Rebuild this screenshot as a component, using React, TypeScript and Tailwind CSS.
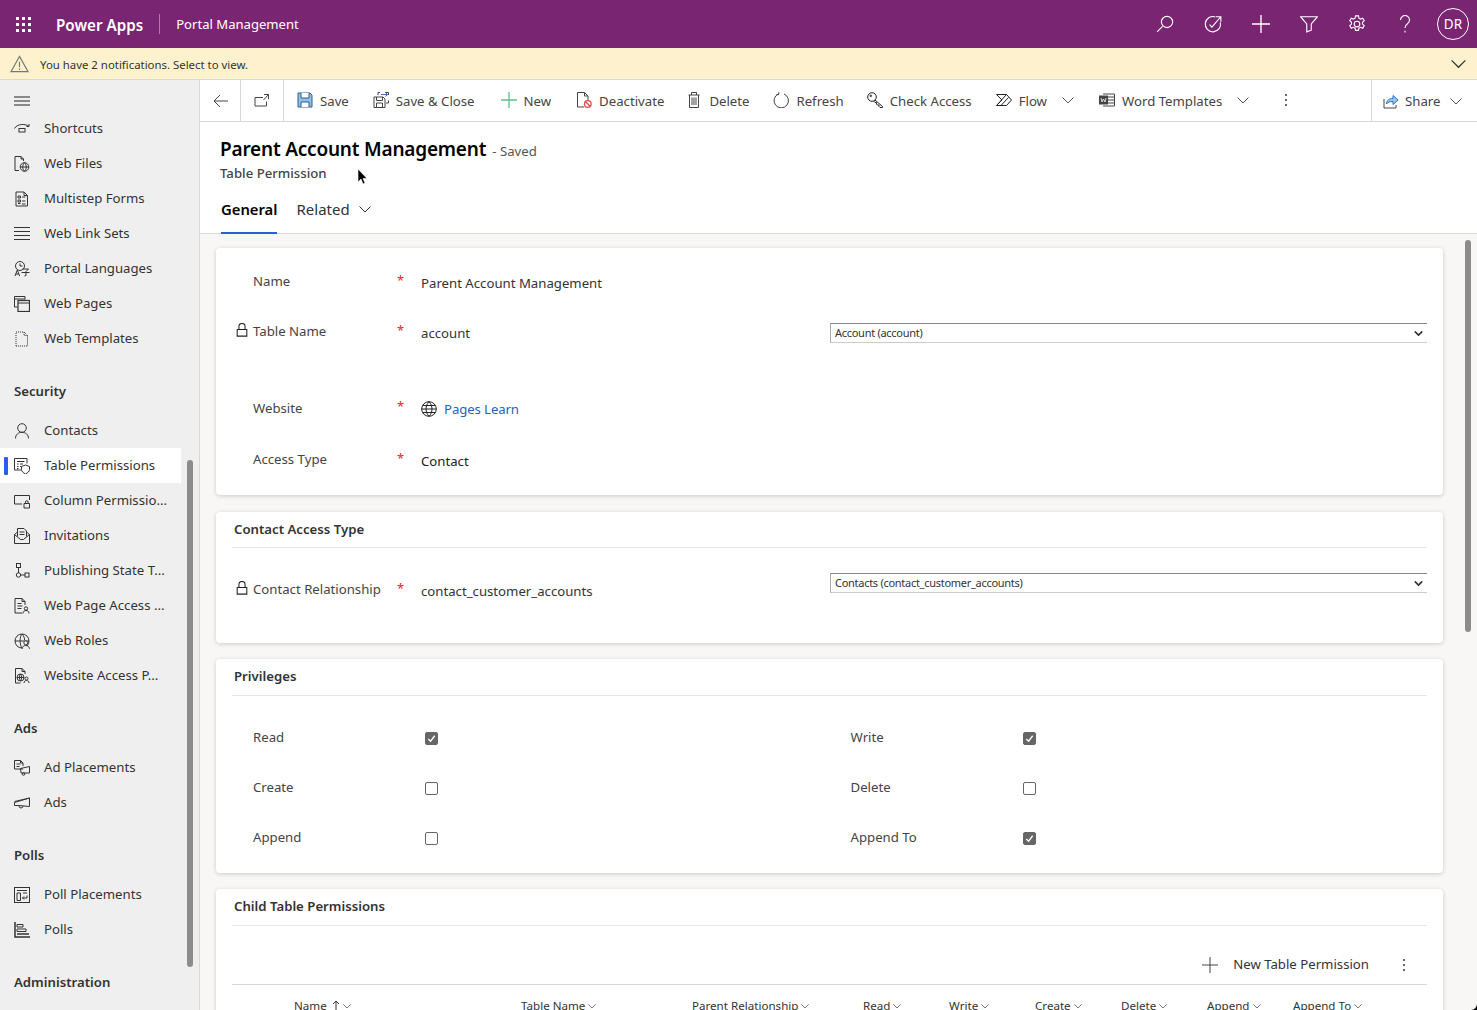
import type { ReactNode } from 'react'
import { ChevronDown } from 'lucide-react'

const Ico = ({ children, size = 16, className = '' }: { children: ReactNode; size?: number; className?: string }) => (
  <svg viewBox="0 0 16 16" width={size} height={size} fill="none" stroke="currentColor" strokeWidth="1" className={`shrink-0 ${className}`}>
    {children}
  </svg>
)

const Chev = ({ className = '' }: { className?: string }) => (
  <svg viewBox="0 0 12 12" width="12" height="12" fill="none" stroke="currentColor" strokeWidth="1" className={`shrink-0 ${className}`}>
    <path d="M.5 3.5 6 9l5.5-5.5" />
  </svg>
)

// sidebar glyphs
const navIcons: Record<string, ReactNode> = {
  shortcuts: <><path d="M.5 7.5C3 2.5 12 2.5 15 5.5" /><path d="M15 3v2.5h-2.5" /><rect x="5" y="7.5" width="6" height="3.5" /></>,
  webFiles: <><path d="M9.5 5V3L7 .5H1v14h4M7 .5V3h2.5" /><circle cx="10.5" cy="11" r="4.3" /><path d="M6.2 11h8.6M10.5 6.7c-2.4 2.500-2.400 6.100 0 8.600M10.500 6.700c2.400 2.500 2.400 6.100 0 8.600" /></>,
  forms: <><path d="M13.500 15H2V1h8l3.500 3.500zM10 1v3.500h3.500" /><path d="M4 5h2.500v2H4zM4 9h2.500v2H4zM4 12.500h2.500M8 6h3.500M8 10h3.500M8 13h3.500" /></>,
  linkSets: <path d="M0 1.500h16M0 5.500h16M0 9.500h16M0 13.500h16" />,
  languages: <><circle cx="6" cy="5" r="4.500" /><path d="M6 2.500V5h2.500" /><path d="M1 15l2.300-6 2.300 6M1.800 13h3M8.500 8h6l-2.500 2.500v4l-1.500.5M7.500 11.500h8" /></>,
  pages: <><path d="M11 3.500V.5H.5v10.500h3" /><path d="M.5 3h10.500" /><rect x="4" y="4.500" width="11.500" height="11" strokeWidth="1.200" /><path d="M4 7h11.500" /></>,
  templates: <path d="M2 15V1h8l3.500 3.500V15zM10 1v3.500h3.500" strokeDasharray="1 1" />,
  contacts: <><circle cx="8" cy="5" r="4.300" /><path d="M1.500 15.500c0-4 3-6.200 6.500-6.200s6.500 2.200 6.500 6.200" /></>,
  tablePerm: <><path d="M7 12H.5V.5H13v5" /><path d="M3 3.500h7.500M3 6h1.500M6 6h3M3 8.500h1.500M3 10.500h1.500M6 8.500h1" /><path d="M11.500 7l4 1.500v3c0 2-2 3.500-4 4.500-2-1-4-2.500-4-4.500v-3z" /></>,
  colPerm: <><path d="M8 11H.5V2.500h15V7" /><path d="M10 10.500h5.500V15H10zM11.500 10.500V9a1.300 1.300 0 0 1 2.600 0v1.500" /></>,
  invitations: <><path d="M.5 6.500v9h15v-9L13 4.500M3 4.500.5 6.500l6 5h3l6-5" /><path d="M3.500 8.500V.5H10l2.500 2.500v5.500M5.500 4h5M5.500 6.500h5" /></>,
  publishing: <><rect x="2.500" y=".5" width="4" height="4" /><path d="M4.500 4.500V10" /><circle cx="4.500" cy="12" r="2.200" /><path d="M6.700 12H11" /><rect x="11" y="10" width="4" height="4" /></>,
  pageAccess: <><path d="M11 7V3.500L8 .5H1v14.500h7M8 .5v3h3" /><path d="M3.500 5.500h4M3.500 8h5M3.500 10.500h4" /><circle cx="12" cy="10.500" r="1.700" /><path d="M9 15.500c0-2 1.300-3 3-3s3 1 3 3" /></>,
  roles: <><circle cx="8" cy="8" r="7" /><path d="M1 8h14M8 1C5.500 3.500 5.500 12 8 15M8 1c2.500 2.500 2.500 5 2.500 6" /><circle cx="11.800" cy="9.800" r="2" fill="#efefef" /><path d="M8.200 15.800c0-2 1.600-3.300 3.600-3.300s3.600 1.300 3.600 3.300" fill="#efefef" /></>,
  siteAccess: <><path d="M11 6V3.500L8 .5H1.500v14.500h5M8 .5v3h3" /><circle cx="6.500" cy="9.500" r="3.500" /><path d="M3 9.500h7M6.500 6c-1.500 2-1.500 5 0 7M6.500 6c1.500 2 1.500 5 0 7" /><circle cx="12.500" cy="10.500" r="1.500" /><path d="M10 15c0-1.500 1-2.500 2.500-2.500S15 13.500 15 15" /></>,
  adPlace: <><path d="M9 9H.5V.5h6L9 3v3M6.500.5V3H9" /><path d="M2.500 4h4M2.500 6.500h3" /><path d="M6.500 8.500l9-2v6.500H7z" /><circle cx="9.500" cy="14" r="1.300" /></>,
  ads: <><path d="M15.500 3v8.500L5 10.500H.5V7.500z" /><path d="M5 11a2 2 0 0 0 4 0" /><path d="M.5 6.500 15.500 3" /></>,
  pollPlace: <><rect x=".5" y=".5" width="15" height="15" /><path d="M3 3.500h10M3 6h3.500v7.500H3zM9 6h4M13 8.500V11H8.500M10 9.500 8.500 11l1.500 1.500" /></>,
  polls: <><path d="M1 0v15h15" strokeWidth="1.500" /><path d="M3 2.500h6v2.500H3zM3 7h9v2.500H3z" /><path d="M3 12h12" strokeWidth="1.500" /></>,
}

type NavRow = { type: 'item'; label: string; icon: string; active?: boolean } | { type: 'head'; label: string }

const nav: NavRow[] = [
  { type: 'item', label: 'Shortcuts', icon: 'shortcuts' },
  { type: 'item', label: 'Web Files', icon: 'webFiles' },
  { type: 'item', label: 'Multistep Forms', icon: 'forms' },
  { type: 'item', label: 'Web Link Sets', icon: 'linkSets' },
  { type: 'item', label: 'Portal Languages', icon: 'languages' },
  { type: 'item', label: 'Web Pages', icon: 'pages' },
  { type: 'item', label: 'Web Templates', icon: 'templates' },
  { type: 'head', label: 'Security' },
  { type: 'item', label: 'Contacts', icon: 'contacts' },
  { type: 'item', label: 'Table Permissions', icon: 'tablePerm', active: true },
  { type: 'item', label: 'Column Permissio...', icon: 'colPerm' },
  { type: 'item', label: 'Invitations', icon: 'invitations' },
  { type: 'item', label: 'Publishing State T...', icon: 'publishing' },
  { type: 'item', label: 'Web Page Access ...', icon: 'pageAccess' },
  { type: 'item', label: 'Web Roles', icon: 'roles' },
  { type: 'item', label: 'Website Access P...', icon: 'siteAccess' },
  { type: 'head', label: 'Ads' },
  { type: 'item', label: 'Ad Placements', icon: 'adPlace' },
  { type: 'item', label: 'Ads', icon: 'ads' },
  { type: 'head', label: 'Polls' },
  { type: 'item', label: 'Poll Placements', icon: 'pollPlace' },
  { type: 'item', label: 'Polls', icon: 'polls' },
  { type: 'head', label: 'Administration' },
]

function TopBar() {
  return (
    <header className="flex h-12 shrink-0 items-center bg-[#7a2571] text-white">
      <div className="ml-4 grid w-[15px] grid-cols-3 gap-[3px]">
        {Array.from({ length: 9 }).map((_, i) => (
          <span key={i} className="size-[3px] bg-white" />
        ))}
      </div>
      <span className="ml-[25px] translate-y-px text-[15.2px] font-semibold">Power Apps</span>
      <span className="ml-4 h-5 w-px bg-white/40" />
      <span className="ml-4 translate-y-px text-[13.1px]">Portal Management</span>
      <div className="ml-auto flex items-center">
        <span className="flex w-12 justify-center">
          <Ico size={18}><path d="M1 15l4.800-4.800" /><circle cx="9.800" cy="6.200" r="5" /></Ico>
        </span>
        <span className="flex w-12 justify-center">
          <Ico size={18}><path d="M14.500 6.500A6.800 6.800 0 1 1 10 1.700" /><path d="M5 8.500l2 2.200L14.500 2M10.500 1.500h4.500V6" /></Ico>
        </span>
        <span className="flex w-12 justify-center">
          <Ico size={18}><path d="M8 0v16M0 8h16" strokeWidth="1.200" /></Ico>
        </span>
        <span className="flex w-12 justify-center">
          <Ico size={18}><path d="M.5 1.500h15L10 8v5.500L6 15V8z" /></Ico>
        </span>
        <span className="flex w-12 justify-center">
          <Ico size={18}>
            <circle cx="8" cy="8" r="2.500" />
            <path d="M6.700.8h2.600l.4 2 1.500.8 1.900-.8 1.300 2.300-1.500 1.300v1.700l1.500 1.300-1.300 2.300-1.900-.8-1.500.8-.4 2H6.700l-.4-2-1.500-.8-1.900.8-1.300-2.300 1.500-1.300V6.400L1.600 5.100l1.300-2.300 1.900.8 1.500-.8z" />
          </Ico>
        </span>
        <span className="flex w-12 justify-center">
          <Ico size={18}><path d="M4 4.500a4 4 0 1 1 6.200 3.300C8.800 8.800 8 9.500 8 11.500M8 14v1.500" /></Ico>
        </span>
        <span className="flex w-12 justify-center">
          <span className="flex size-8 items-center justify-center rounded-full border border-white text-[13.5px]">DR</span>
        </span>
      </div>
    </header>
  )
}

function Notice() {
  return (
    <div className="flex h-8 shrink-0 items-center border-b border-[#d8d8d8] bg-[#fdf2cd] pl-[10px] pr-[11px] text-[#333]">
      <svg viewBox="0 0 20 18" width="19" height="18" fill="none" stroke="#777" strokeWidth="1.200" className="shrink-0">
        <path d="M10 1 19 17H1z" />
        <path d="M10 6.500v6M10 13.800v1.400" />
      </svg>
      <span className="ml-[11px] translate-y-px text-[11.4px]">You have 2 notifications. Select to view.</span>
      <Chev className="ml-auto size-[15px]" />
    </div>
  )
}

function Cmd({ icon, label, chevron, className = '' }: { icon: ReactNode; label: string; chevron?: boolean; className?: string }) {
  return (
    <div className={`flex items-center ${className}`}>
      {icon}
      <span className="ml-[7px] translate-y-px whitespace-nowrap">{label}</span>
      {chevron && <Chev className="ml-[15px] mr-[-2px] text-[#555]" />}
    </div>
  )
}

const Dots = ({ className = '' }: { className?: string }) => (
  <div className={`flex flex-col gap-[3px] ${className}`}>
    <span className="size-[2px] rounded-full bg-[#333]" />
    <span className="size-[2px] rounded-full bg-[#333]" />
    <span className="size-[2px] rounded-full bg-[#333]" />
  </div>
)

function CommandBar() {
  return (
    <div className="flex h-[42px] shrink-0 items-center border-b border-[#d8d8d8] bg-white text-[13.2px] text-[#444]">
      <div className="flex h-full w-[41px] shrink-0 items-center justify-center border-r border-[#d8d8d8] pl-px">
        <Ico><path d="M15 8H1M7 2 1 8l6 6" /></Ico>
      </div>
      <div className="flex h-full w-[43px] shrink-0 items-center justify-center border-r border-[#d8d8d8]">
        <Ico><path d="M9 4.500H1v8.500h11.500V8.500M10 1.500h4.500V6M14.500 1.500 9.500 7" /></Ico>
      </div>
      <div className="flex flex-1 items-center gap-[24px] pl-[13px]">
        <Cmd label="Save" icon={<Ico className="text-[#2f5f8a]"><path d="M1 1h12l2 2v12H1z" fill="#8fc1ea" /><path d="M4 1v5h8V1M4 15v-5h8v5" fill="#fff" /></Ico>} />
        <Cmd label="Save & Close" icon={<Ico><path d="M1 5h9l2 2v8.500H1z" /><path d="M3.500 5v3.500h6V5M3.500 15.500V11h6v4.500" /><path d="M5 3V.5h2M12 .5h3.500V3M15.500 8.500V11H13" /><path d="M8 2.500h6.500M12.500.5l2 2-2 2" stroke="#2a6fc4" /></Ico>} />
        <Cmd label="New" className="ml-[2px]" icon={<Ico className="text-[#5cc18f]"><path d="M8 0v16M0 8h16" strokeWidth="1.300" /></Ico>} />
        <Cmd label="Deactivate" className="ml-px" icon={<Ico><path d="M8 15H1.500V.5h7l3.500 3.500V8M8.500.5V4H12" /><circle cx="11.800" cy="12" r="3.300" stroke="#e5484d" strokeWidth="1.300" /><path d="m9.500 9.700 4.600 4.600" stroke="#e5484d" strokeWidth="1.300" /></Ico>} />
        <Cmd label="Delete" className="ml-[-2px]" icon={<Ico><path d="M2.500 3h11M3.500 3v12.500h9V3M5.500 3V.5h5V3M6 5.500v7.500M8 5.500v7.500M10 5.500v7.500" /></Ico>} />
        <Cmd label="Refresh" icon={<Ico><path d="M5.500 2A7.200 7.200 0 1 0 11 2" /><path d="M5.800 .2V2.500H3.500" /></Ico>} />
        <Cmd label="Check Access" className="ml-[-1px]" icon={<Ico className="text-[#222]"><circle cx="5" cy="5" r="4.300" /><path d="M8 8 15.500 14.500v1H13l-1-1V13h-1.500l-1-1v-1.500H8L6.500 9" /><circle cx="3.800" cy="3.800" r=".8" /></Ico>} />
        <Cmd label="Flow" chevron icon={<Ico className="text-[#222]"><path d="M.5 2.500h10l5 5.500-5 5.500H.5l5.500-5.500zM.5 13.500 10.500 2.500M5 13.500 12.500 5.500" /></Ico>} />
        <Cmd label="Word Templates" chevron className="ml-[3px]" icon={<Ico><path d="M4 2h11.500v12H4" /><path d="M9 5h6.500M9 8h6.500M9 11h6.500" /><rect x=".5" y="4" width="8" height="8" fill="#444" /><path d="M2 6l1 4 1.500-3 1.500 3 1-4" stroke="#fff" strokeWidth=".8" /></Ico>} />
        <Dots className="ml-[14px]" />
      </div>
      <div className="flex h-full w-[106px] shrink-0 items-center border-l border-[#d8d8d8] pl-[11px]">
        <Ico><path d="M1 6v9h12v-3" stroke="#444" /><path d="M3.500 11c0-4 3-5.500 6.500-5.500V2.500l5 4.500-5 4.500V8.500c-3 0-5 .5-6.500 2.500z" stroke="#2a6fc4" fill="#9cc7ee" /></Ico>
        <span className="ml-[6px] translate-y-px">Share</span>
        <Chev className="ml-[10px] text-[#555]" />
      </div>
    </div>
  )
}

function FormHeader() {
  return (
    <div className="h-[112px] shrink-0 border-b border-[#d8d8d8] bg-white pl-5">
      <div className="flex items-baseline pt-[13px] leading-[28px]">
        <span className="text-[19px] font-semibold tracking-[-0.2px] text-black">Parent Account Management</span>
        <span className="ml-[6px] text-[13.2px] text-[#555]">- Saved</span>
      </div>
      <div className="text-[13.2px] font-medium leading-[17px] text-[#444]">Table Permission</div>
      <div className="mt-[11px] flex h-[41px]">
        <span className="ml-px h-[41px] border-b-2 border-[#2b5fd9] pt-[5px] text-[14.8px] font-semibold leading-[22px] text-black">General</span>
        <span className="ml-[19px] mt-[5px] flex h-[22px] items-center text-[15px] text-[#333]">
          Related
          <Chev className="ml-[9px]" />
        </span>
      </div>
    </div>
  )
}

const Card = ({ className = '', children }: { className?: string; children: ReactNode }) => (
  <section className={`rounded-[4px] bg-white shadow-[0_1px_4px_rgba(0,0,0,0.18)] ${className}`}>{children}</section>
)

const CardTitle = ({ children, className = 'h-9' }: { children: ReactNode; className?: string }) => (
  <div className={`mx-4 flex items-center border-b border-[#e6e6e6] pl-[2px] text-[13.2px] font-semibold text-[#333] ${className}`}>{children}</div>
)

const Lock = () => (
  <Ico size={14} className="mr-1 mt-[-7px] text-[#222]"><path d="M2.500 7.500h11v7.500h-11zM4.500 7.500V4a3.500 3.500 0 0 1 7 0v3.500" strokeWidth="1.200" /></Ico>
)

function Field({ label, locked, children, select, selectClass = '', labelClass = '-translate-y-px' }: { label: string; locked?: boolean; children: ReactNode; select?: string; selectClass?: string; labelClass?: string }) {
  return (
    <div className="flex h-[50px] items-center text-[13.2px]">
      <div className={`flex h-full w-[146px] items-center text-[#444] ${locked ? 'pl-[19px]' : 'pl-[37px]'}`}>
        {locked && <Lock />}
        <span className={`whitespace-nowrap ${labelClass}`}>{label}</span>
      </div>
      <span className="w-[59px] -translate-y-[2px] pl-[35px] text-[13px] text-[#f01c22]">*</span>
      <div className="w-[409px] translate-y-px text-[#333]">{children}</div>
      {select && (
        <div className={`flex h-5 w-[597px] items-center justify-between border-y border-l border-t-[#888] border-b-[#ccc] border-l-[#aaa] pl-1 pr-[2px] text-[11px] tracking-[-0.28px] text-[#333] ${selectClass}`}>
          {select}
          <ChevronDown size={13} strokeWidth={3} className="text-[#333]" />
        </div>
      )}
    </div>
  )
}

const Check = ({ on }: { on?: boolean }) => (
  <span className={`flex size-[13px] items-center justify-center rounded-[2px] border ${on ? 'border-[#666] bg-[#666]' : 'border-[#666] bg-white'}`}>
    {on && (
      <svg viewBox="0 0 12 12" width="11" height="11" fill="none" stroke="#fff" strokeWidth="1.500"><path d="m2.500 6.500 2.500 2.500 4.500-6" /></svg>
    )}
  </span>
)

const Priv = ({ label, on }: { label: string; on?: boolean }) => (
  <div className="flex h-[50px] items-center text-[13.2px] text-[#444]">
    <span className="w-[172px]">{label}</span>
    <Check on={on} />
  </div>
)

const columns = [
  { label: 'Name', w: 'w-[227px]' },
  { label: 'Table Name', w: 'w-[171px]' },
  { label: 'Parent Relationship', w: 'w-[171px]' },
  { label: 'Read', w: 'w-[86px]' },
  { label: 'Write', w: 'w-[86px]' },
  { label: 'Create', w: 'w-[86px]' },
  { label: 'Delete', w: 'w-[86px]' },
  { label: 'Append', w: 'w-[86px]' },
  { label: 'Append To', w: 'w-[86px]' },
]

function Form() {
  return (
    <div className="relative flex-1 overflow-hidden bg-[#f8f7f6] pl-4 pr-[34px] pt-[14px]">
      <div className="flex flex-col gap-4">
        <Card className="mb-px h-[247px] pt-[10px]">
          <Field label="Name">Parent Account Management</Field>
          <Field label="Table Name" locked select="Account (account)">account</Field>
          <div className="h-[26px]" />
          <Field label="Website" labelClass="">
            <span className="flex items-center">
              <Ico className="-translate-y-px text-[#222]"><circle cx="8" cy="8" r="7.300" /><path d="M.7 8h14.600M1.700 4.500h12.600M1.700 11.500h12.600M8 .7c-4 4-4 10.600 0 14.600M8 .7c4 4 4 10.600 0 14.600" /></Ico>
              <span className="ml-[7px] tracking-[-0.1px] text-[#2563b8]">Pages Learn</span>
            </span>
          </Field>
          <div className="h-[2px]" />
          <Field label="Access Type"><span className="text-[#222]">Contact</span></Field>
        </Card>
        <Card className="h-[131px]">
          <CardTitle>Contact Access Type</CardTitle>
          <div className="h-[18px]" />
          <Field label="Contact Relationship" locked select="Contacts (contact_customer_accounts)" selectClass="-translate-y-2">contact_customer_accounts</Field>
        </Card>
        <Card className="h-[214px]">
          <CardTitle className="h-[37px]">Privileges</CardTitle>
          <div className="grid grid-cols-[597.500px_1fr] pl-[37px] pt-[17px]">
            <Priv label="Read" on />
            <Priv label="Write" on />
            <Priv label="Create" />
            <Priv label="Delete" />
            <Priv label="Append" />
            <Priv label="Append To" on />
          </div>
        </Card>
        <Card className="h-[200px]">
          <CardTitle className="h-[37px]">Child Table Permissions</CardTitle>
          <div className="mx-4 flex h-[59px] items-center justify-end border-b border-[#d8d8d8] pr-[22px] pt-[19px] text-[13.2px] text-[#333]">
            <Ico className="text-[#444]"><path d="M8 0v16M0 8h16" /></Ico>
            <span className="ml-[15px]">New Table Permission</span>
            <Dots className="ml-[34px]" />
          </div>
          <div className="flex pl-[78px] pt-[12px] text-[11.6px] text-[#333]">
            {columns.map((c, i) => (
              <span key={c.label} className={`flex shrink-0 items-center ${c.w}`}>
                {c.label}
                {i === 0 && (
                  <svg viewBox="0 0 8 12" width="8" height="12" fill="none" stroke="currentColor" className="ml-[5px]"><path d="M4 12V1M1 4l3-3 3 3" /></svg>
                )}
                <Chev className="ml-[3px] size-[8px]" />
              </span>
            ))}
          </div>
        </Card>
      </div>
      {/* form scrollbar */}
      <div className="absolute right-[6px] top-[6px] h-[392px] w-[6px] rounded-full bg-[#8c8c8c]" />
    </div>
  )
}

function Sidebar() {
  return (
    <aside className="relative h-full w-[200px] shrink-0 overflow-hidden border-r border-[#d8d8d8] bg-[#efefef] text-[13.2px] text-[#333]">
      <div className="flex h-[31px] items-end pl-[14px]">
        <svg viewBox="0 0 16 10" width="16" height="10" fill="none" stroke="#222" strokeWidth="1" className="mb-[5px]">
          <path d="M0 1h16M0 5h16M0 9h16" />
        </svg>
      </div>
      {nav.map((row) =>
        row.type === 'head' ? (
          <div key={row.label} className="pb-[11px] pl-[14px] pt-[25px] font-semibold leading-[21px]">{row.label}</div>
        ) : (
          <div key={row.label} className={`relative flex h-[35px] w-[181px] items-center pl-[14px] ${row.active ? 'bg-white' : ''}`}>
            {row.active && <span className="absolute left-1 top-[9px] h-[18px] w-1 rounded-[1px] bg-[#2b5cf0]" />}
            <Ico className="text-[#333]">{navIcons[row.icon]}</Ico>
            <span className="ml-[14px] whitespace-nowrap">{row.label}</span>
          </div>
        ),
      )}
      {/* nav scrollbar */}
      <div className="absolute left-[187px] top-[380px] h-[507px] w-[6px] rounded-full bg-[#8c8c8c]" />
    </aside>
  )
}

export default function App() {
  return (
    <div className="relative flex h-[1010px] w-[1477px] flex-col overflow-hidden bg-white font-['Noto_Sans',sans-serif]">
      <TopBar />
      <Notice />
      <div className="flex min-h-0 flex-1">
        <Sidebar />
        <main className="flex min-w-0 flex-1 flex-col">
          <CommandBar />
          <FormHeader />
          <Form />
        </main>
      </div>
      {/* mouse pointer */}
      <svg viewBox="0 0 12 18" width="12" height="18" className="absolute left-[357px] top-[168px]">
        <path d="M1 1v13l3-3 2 5 2-1-2-4.500h4z" fill="#000" stroke="#fff" strokeWidth=".6" />
      </svg>
      {/* window corner */}
      <svg viewBox="0 0 6 6" width="6" height="6" className="absolute bottom-0 right-0">
        <path d="M6 0v6H0a6 6 0 0 0 6-6z" fill="#000" />
      </svg>
    </div>
  )
}
